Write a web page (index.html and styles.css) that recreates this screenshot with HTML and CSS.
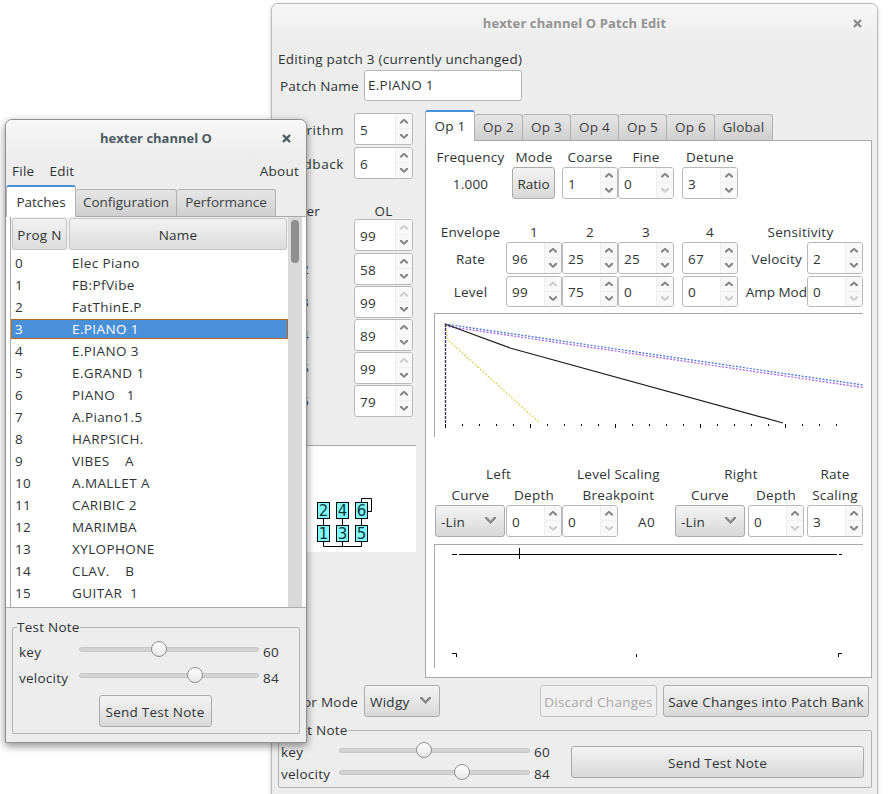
FILE: index.html
```html
<!DOCTYPE html>
<html lang="en">
<head>
<meta charset="utf-8">
<title>hexter channel O</title>
<link rel="stylesheet" href="styles.css">
</head>
<body>
<section class="win back">
  <header class="titlebar">
    <span></span><h1 class="wintitle">hexter channel O Patch Edit</h1>
    <svg class="closex" width="9" height="9" viewBox="0 0 9 9"><path d="M1 1L8 8M8 1L1 8"/></svg>
  </header>
  <p class="editing">Editing patch 3 (currently unchanged)</p>
  <div class="namerow"><label>Patch Name</label><div class="entry">E.PIANO 1</div></div>
  <div class="mainrow">
    <aside class="leftcol">
      <div class="lrow"><label>Algorithm</label><div class="spin wide"><span>5</span><i class="up"></i><i class="dn"></i></div></div>
      <div class="lrow"><label>Feedback</label><div class="spin wide"><span>6</span><i class="up"></i><i class="dn"></i></div></div>
      <div class="olhead"><span class="carrier">Carrier</span><span class="ol">OL</span></div>
      <div class="orow"><label>Op 1</label><div class="spin wide"><span>99</span><i class="up off"></i><i class="dn"></i></div></div>
      <div class="orow"><label>Op 2</label><div class="spin wide"><span>58</span><i class="up"></i><i class="dn"></i></div></div>
      <div class="orow"><label>Op 3</label><div class="spin wide"><span>99</span><i class="up off"></i><i class="dn"></i></div></div>
      <div class="orow"><label>Op 4</label><div class="spin wide"><span>89</span><i class="up"></i><i class="dn"></i></div></div>
      <div class="orow"><label>Op 5</label><div class="spin wide"><span>99</span><i class="up off"></i><i class="dn"></i></div></div>
      <div class="orow"><label>Op 6</label><div class="spin wide"><span>79</span><i class="up"></i><i class="dn"></i></div></div>
      <div class="algo">
        <svg width="138" height="106" viewBox="0 0 138 106">
          <path class="wire" d="M45.5 73V79M64.5 73V79M83.5 73V79M45.5 96V100.5H83.5V96M64.5 96V100.5M83.5 56V52.5H93.5V65.5H89"/>
          <g class="opbox">
            <rect x="39.5" y="56.5" width="12" height="16"/><rect x="58.5" y="56.5" width="12" height="16"/><rect x="77.5" y="56.5" width="12" height="16"/>
            <rect x="39.5" y="79.5" width="12" height="16"/><rect x="58.5" y="79.5" width="12" height="16"/><rect x="77.5" y="79.5" width="12" height="16"/>
          </g>
          <g class="opnum">
            <text x="45.5" y="70">2</text><text x="64.5" y="70">4</text><text x="83.5" y="70">6</text>
            <text x="45.5" y="93">1</text><text x="64.5" y="93">3</text><text x="83.5" y="93">5</text>
          </g>
        </svg>
      </div>
    </aside>
    <div class="notebook">
      <nav class="tabs">
        <span class="tab active t50">Op 1</span><span class="tab t48">Op 2</span><span class="tab t48">Op 3</span><span class="tab t48">Op 4</span><span class="tab t48">Op 5</span><span class="tab t48">Op 6</span><span class="tab t58">Global</span>
      </nav>
      <div class="panel">
        <div class="optrack top">
          <div class="c">Frequency</div><div class="c">Mode</div><div class="c">Coarse</div><div class="c">Fine</div><div class="c det">Detune</div>
          <div class="c mid rowstart">1.000</div>
          <div class="btn ratio">Ratio</div>
          <div class="spin"><span>1</span><i class="up"></i><i class="dn"></i></div>
          <div class="spin"><span>0</span><i class="up"></i><i class="dn off"></i></div>
          <div class="spin pushr"><span>3</span><i class="up"></i><i class="dn"></i></div>
        </div>
        <div class="optrack env">
          <div class="c">Envelope</div><div class="c">1</div><div class="c">2</div><div class="c">3</div><div class="c det">4</div><div class="c two">Sensitivity</div>
          <div class="c mid">Rate</div>
          <div class="spin"><span>96</span><i class="up"></i><i class="dn"></i></div>
          <div class="spin"><span>25</span><i class="up"></i><i class="dn"></i></div>
          <div class="spin"><span>25</span><i class="up"></i><i class="dn"></i></div>
          <div class="spin pushr"><span>67</span><i class="up"></i><i class="dn"></i></div>
          <div class="r mid">Velocity</div>
          <div class="spin"><span>2</span><i class="up"></i><i class="dn"></i></div>
          <div class="c midlo">Level</div>
          <div class="spin lo"><span>99</span><i class="up off"></i><i class="dn"></i></div>
          <div class="spin lo"><span>75</span><i class="up"></i><i class="dn"></i></div>
          <div class="spin lo"><span>0</span><i class="up"></i><i class="dn off"></i></div>
          <div class="spin pushr lo"><span>0</span><i class="up"></i><i class="dn off"></i></div>
          <div class="r midlo amp">Amp Mod</div>
          <div class="spin lo"><span>0</span><i class="up"></i><i class="dn off"></i></div>
        </div>
        <div class="graph g1">
          <svg width="428" height="123" viewBox="0 0 428 123">
            <path class="dot blue" d="M10 10L428 71"/>
            <path class="dot purple" d="M10 12L428 73.5"/>
            <path class="dot yellow" d="M10 10L13 26L105 109"/>
            <path class="solid" d="M10 10L75 34L348 109"/>
            <path class="vert" d="M10.5 10V109"/>
            <path class="tick" d="M10.5 110V114M27.5 110V112M44.5 110V112M61.5 110V112M78.5 110V112M95.5 110V114M112.5 110V112M129.5 110V112M146.5 110V112M163.5 110V112M180.5 110V114M197.5 110V112M214.5 110V112M231.5 110V112M248.5 110V112M265.5 110V114M282.5 110V112M299.5 110V112M316.5 110V112M333.5 110V112M350.5 110V114M367.5 110V112M384.5 110V112M401.5 110V112"/>
          </svg>
        </div>
        <div class="lstrack">
          <div class="c s2">Left</div><div class="c s2">Level Scaling</div><div class="c s2">Right</div><div class="c">Rate</div>
          <div class="c">Curve</div><div class="c">Depth</div><div class="c s2">Breakpoint</div><div class="c trim">Curve</div><div class="c trim">Depth</div><div class="c">Scaling</div>
          <div class="btn combo"><span>-Lin</span><i class="chev"></i></div>
          <div class="spin"><span>0</span><i class="up"></i><i class="dn off"></i></div>
          <div class="spin"><span>0</span><i class="up"></i><i class="dn off"></i></div>
          <div class="c mid">A0</div>
          <div class="btn combo"><span>-Lin</span><i class="chev"></i></div>
          <div class="spin"><span>0</span><i class="up"></i><i class="dn off"></i></div>
          <div class="spin"><span>3</span><i class="up"></i><i class="dn"></i></div>
        </div>
        <div class="graph g2">
          <svg width="428" height="123" viewBox="0 0 428 123">
            <path class="tick" d="M17 9.5H22M24 9.5H402M404 9.5H407M84.5 3V14M17 108.5H21.5V112M201.5 109V112M403.5 112V108.5H407"/>
          </svg>
        </div>
      </div>
    </div>
  </div>
  <div class="actions">
    <label class="modelabel">Editor Mode</label>
    <div class="btn combo widgy"><span>Widgy</span><i class="chev"></i></div>
    <div class="btn discard">Discard Changes</div>
    <div class="btn save">Save Changes into Patch Bank</div>
  </div>
  <fieldset class="note backnote">
    <legend>Test Note</legend>
    <div class="notecols">
      <div class="sliders">
        <div class="srow"><label>key</label><div class="slider"><b style="left:44.5%"></b></div><span>60</span></div>
        <div class="srow"><label>velocity</label><div class="slider"><b style="left:64.4%"></b></div><span>84</span></div>
      </div>
      <div class="btn sendwide">Send Test Note</div>
    </div>
  </fieldset>
</section>

<section class="win front">
  <header class="titlebar">
    <span></span><h1 class="wintitle">hexter channel O</h1>
    <svg class="closex" width="9" height="9" viewBox="0 0 9 9"><path d="M1 1L8 8M8 1L1 8"/></svg>
  </header>
  <nav class="menubar"><span>File</span><span>Edit</span><span class="about">About</span></nav>
  <nav class="tabs ftabs">
    <span class="tab active t70">Patches</span><span class="tab t101">Configuration</span><span class="tab t99">Performance</span>
  </nav>
  <div class="fpanel">
    <div class="tree">
      <div class="treemain">
        <div class="thead"><div class="th prog">Prog N</div><div class="th namecol">Name</div></div>
        <ul class="rows">
          <li><span>0</span><span>Elec Piano</span></li>
          <li><span>1</span><span>FB:PfVibe</span></li>
          <li><span>2</span><span>FatThinE.P</span></li>
          <li class="sel"><span>3</span><span>E.PIANO 1</span></li>
          <li><span>4</span><span>E.PIANO 3</span></li>
          <li><span>5</span><span>E.GRAND 1</span></li>
          <li><span>6</span><span>PIANO&nbsp;&nbsp; 1</span></li>
          <li><span>7</span><span>A.Piano1.5</span></li>
          <li><span>8</span><span>HARPSICH.</span></li>
          <li><span>9</span><span>VIBES&nbsp;&nbsp;&nbsp; A</span></li>
          <li><span>10</span><span>A.MALLET A</span></li>
          <li><span>11</span><span>CARIBIC 2</span></li>
          <li><span>12</span><span>MARIMBA</span></li>
          <li><span>13</span><span>XYLOPHONE</span></li>
          <li><span>14</span><span>CLAV.&nbsp;&nbsp;&nbsp; B</span></li>
          <li><span>15</span><span>GUITAR&nbsp; 1</span></li>
        </ul>
      </div>
      <div class="scroll"><div class="thumb"></div></div>
    </div>
  </div>
  <fieldset class="note frontnote">
    <legend>Test Note</legend>
    <div class="srow"><label>key</label><div class="slider"><b style="left:44.4%"></b></div><span>60</span></div>
    <div class="srow"><label>velocity</label><div class="slider"><b style="left:64.4%"></b></div><span>84</span></div>
    <div class="btn sendsmall">Send Test Note</div>
  </fieldset>
</section>
</body>
</html>
```
FILE: styles.css
```css
* { box-sizing: border-box; }
html, body { margin: 0; height: 100%; }
body {
  background: #fff;
  overflow: hidden;
  font-family: "Open Sans", "Noto Sans", sans-serif;
  font-size: 13.5px;
  letter-spacing: .25px;
  color: #2e3436;
  line-height: 20px;
}
label { display: block; white-space: nowrap; }
p, h1, ul { margin: 0; padding: 0; }

/* windows on the desktop */
.win {
  position: absolute;
  background: #ededed;
  border-radius: 7px 7px 0 0;
}
.back {
  left: 271px; top: 3px; width: 607px; height: 810px;
  border: 1px solid #bdbdbd;
  box-shadow: 0 1px 4px rgba(0,0,0,.18);
}
.front {
  left: 5px; top: 119px; width: 302px; height: 624px;
  border: 1px solid #8f8f8f;
  border-radius: 7px 7px 1px 1px;
  box-shadow: 0 3px 8px rgba(0,0,0,.45);
  z-index: 2;
}

/* title bars */
.titlebar {
  display: grid;
  grid-template-columns: 1fr auto 1fr;
  align-items: center;
  height: 36px;
  padding-top: 2px;
  border-radius: 6px 6px 0 0;
  background: linear-gradient(#f7f7f7, #ededed);
}
.front .titlebar { padding-top: 0; }
.wintitle { font-size: 13px; font-weight: 700; line-height: 20px; color: #939393; letter-spacing: .1px; }
.front .wintitle { letter-spacing: 0; }
.closex { justify-self: end; margin-right: 15px; }
.closex path { stroke: #8c8c8c; stroke-width: 2.4; fill: none; }
.front .wintitle { color: #4c5b63; }
.front .closex path { stroke: #4c5b63; }

/* back window content */
.editing { padding: 9px 0 0 6px; height: 30px; white-space: nowrap; }
.namerow { display: flex; align-items: center; height: 31px; padding-left: 8px; gap: 6px; }
.namerow label { width: 78px; }
.entry {
  width: 158px; height: 31px; padding: 0 3px; line-height: 29px;
  background: #fff; border: 1px solid #b6b6b6; border-radius: 3px;
}
.mainrow { display: flex; margin-top: 8px; padding-left: 6px; }
.leftcol { width: 147px; padding-top: 4px; flex: none; }
.lrow { display: flex; justify-content: flex-end; align-items: center; gap: 10px; padding-right: 12px; margin-bottom: 2px; }
.lrow label { width: 70px; flex: none; text-align: right; padding-top: 2px; letter-spacing: .6px; }
.olhead { display: flex; height: 19px; margin-top: 21px; padding-top: 3px; align-items: center; white-space: nowrap; }
.carrier { width: 60px; margin-left: -18px; flex: none; text-align: right; }
.ol { margin-left: 44px; width: 39px; text-align: center; }
.orow { display: flex; justify-content: flex-end; align-items: center; padding-right: 12px; margin-bottom: 1px; }
.olhead + .orow { margin-bottom: 2px; }
.orow label { margin-right: 45px; flex: none; }
.algo {
  width: 138px; height: 107px; margin-top: 28px;
  background: #fff; border-top: 1px solid #a9a9a9;
}
.algo svg { display: block; }
.wire { fill: none; stroke: #000; stroke-width: 1; }
.opbox rect { fill: #7ffcff; stroke: #000; stroke-width: 1; }
.opnum text { font-family: "DejaVu Sans", sans-serif; font-size: 15px; letter-spacing: 0; fill: #163636; text-anchor: middle; }

/* spin buttons */
.spin {
  display: grid;
  grid-template-columns: 1fr 17px;
  grid-template-rows: 1fr 1fr;
  flex: none;
  width: 56px; height: 32px;
  background: #fff;
  border: 1px solid #b9b9b9;
  border-radius: 3px;
  overflow: hidden;
}
.spin.wide { width: 59px; }
.spin span { grid-row: 1 / 3; padding-left: 5px; line-height: 32px; }
.spin.lo { height: 31px; margin-top: 2px; }
.spin.lo span { line-height: 30px; }
.spin i {
  display: flex; align-items: center; justify-content: center;
  grid-column: 2; background: #f8f8f8; border-left: 1px solid #eee;
}
.spin i.up { border-bottom: 1px solid #f0f0f0; }
.spin i::after { content: ""; width: 8px; height: 5px; background: #858585; }
.spin i.up::after { clip-path: polygon(50% 0, 100% 72%, 100% 100%, 78% 100%, 50% 52%, 22% 100%, 0 100%, 0 72%); }
.spin i.dn::after { clip-path: polygon(0 0, 22% 0, 50% 48%, 78% 0, 100% 0, 100% 28%, 50% 100%, 0 28%); }
.spin i.off::after { background: #cdcdcd; }

/* notebooks */
.tabs { display: flex; align-items: flex-end; height: 31px; }
.tab {
  height: 26px; line-height: 24px; text-align: center; white-space: nowrap;
  background: linear-gradient(#e6e6e6, #cfcfcf);
  border: 1px solid #b1b1b1; border-bottom: none; border-left-width: 0;
  border-radius: 3px 3px 0 0; color: #3a4144;
}
.tab.active {
  height: 31px; line-height: 29px; background: #fff; color: #2e3436;
  border: 1px solid #b1b1b1; border-top: 2px solid #4a90d9; border-bottom: none;
  position: relative; top: 1px; z-index: 1;
}
.t50 { width: 50px; } .t48 { width: 48px; } .t58 { width: 58px; }
.notebook { width: 447px; flex: none; }
.panel {
  height: 538px; background: #fff;
  border: 1px solid #a9a9a9; padding: 6px 0 0 9px;
}
.c { text-align: center; white-space: nowrap; }
.r { text-align: right; white-space: nowrap; padding-right: 5px; }
.mid { align-self: center; padding-top: 2px; }
.midlo { align-self: center; padding-top: 2px; }
.rowstart { grid-column: 1; }
.optrack {
  display: grid;
  grid-template-columns: 71px 56px 56px 56px 64px 69px 56px;
}
.top { grid-template-rows: 20px 32px; }
.env { grid-template-rows: 20px 32px 34px; margin-top: 23px; }
.det { padding-left: 8px; }
.two { grid-column: span 2; }
.pushr { justify-self: end; }
.amp { padding-right: 0; letter-spacing: 0; }
.ratio { width: 43px; margin-left: 6px; letter-spacing: 0; }
.graph { margin-left: -1px; width: 429px; height: 124px; background: #fff; border-top: 1px solid #a9a9a9; border-left: 1px solid #a9a9a9; }
.graph svg { display: block; }
.g1 { margin-top: 5px; }
.dot { fill: none; stroke-width: 1.2; stroke-dasharray: 2 1.5; }
.blue { stroke: #3d73d4; }
.purple { stroke: #a65cf0; }
.yellow { stroke: #e6c53c; stroke-width: 1.4; stroke-dasharray: 1.5 2; }
.solid { fill: none; stroke: #1a1a1a; stroke-width: 1.2; }
.vert { stroke: #3a3a6a; stroke-width: 1.4; stroke-dasharray: 3 1; }
.tick { fill: none; stroke: #000; stroke-width: 1; }
.lstrack {
  display: grid;
  grid-template-columns: 71px 56px 56px 57px 73px 59px 56px;
  grid-template-rows: 21px 20px 32px;
  margin-top: 27px;
}
.s2 { grid-column: span 2; }
.trim { padding-right: 3px; }
.g2 { margin-top: 7px; }

/* buttons and combos */
.btn {
  height: 32px; line-height: 32px; text-align: center; white-space: nowrap;
  background: linear-gradient(#f4f4f4, #d8d8d8);
  border: 1px solid #ababab; border-radius: 3px;
}
.combo {
  display: flex; justify-content: space-between; align-items: center;
  width: 70px; padding: 2px 8px 0 5px;
}
.chev {
  width: 11px; height: 7px; margin-top: -3px; background: #888;
  clip-path: polygon(0 0, 20% 0, 50% 55%, 80% 0, 100% 0, 100% 20%, 50% 100%, 0 20%);
}
.actions { display: flex; align-items: center; height: 32px; margin-top: 7px; padding-left: 6px; }
.modelabel { width: 80px; text-align: right; margin-right: 6px; padding-top: 2px; }
.widgy { width: 76px; }
.discard { width: 117px; margin-left: auto; color: #a8a8a8; background: #efefef; border-color: #c4c4c4; }
.save { width: 206px; margin-left: 6px; margin-right: 8px; }

/* test note groups */
.note { border: 1px solid #b4b4b4; border-radius: 2px; margin: 0; padding: 0; min-width: 0; }
.note legend { padding: 0; margin-left: 4px; height: 20px; line-height: 20px; }
.backnote { width: 594px; margin: 3px 0 0 6px; padding: 1px 7px 2px 2px; }
.notecols { display: flex; align-items: flex-start; justify-content: space-between; }
.srow { display: flex; align-items: center; height: 22px; }
.srow > span { margin-left: 4px; }
.backnote .srow label { width: 58px; }
.backnote .slider { width: 191px; }
.sendwide { width: 293px; margin-top: 5px; }
.slider {
  position: relative; height: 5px; margin-bottom: 4px; border-radius: 3px;
  background: #d3d3d3; border: 1px solid #c6c6c6;
}
.slider b {
  position: absolute; top: -7px; width: 16px; height: 16px; margin-left: -8px;
  border-radius: 50%; background: linear-gradient(#fff, #e8e8e8); border: 1px solid #8f8f8f;
}

/* front window content */
.menubar { display: flex; height: 28px; align-items: center; padding: 2px 7px 0 6px; gap: 15px; }
.about { margin-left: auto; }
.ftabs { height: 32px; letter-spacing: 0; }
.t70 { width: 70px; } .t101 { width: 101px; } .t99 { width: 99px; }
.ftabs .tab { height: 27px; line-height: 25px; }
.ftabs .tab.active { height: 32px; line-height: 30px; }
.fpanel {
  height: 392px; padding: 0 4px 0 4px; background: #fff;
  border-top: 1px solid #a9a9a9; border-bottom: 1px solid #a9a9a9;
}
.tree { display: flex; height: 100%; border-left: 1px solid #a9a9a9; }
.treemain { width: 278px; overflow: hidden; }
.thead { display: flex; gap: 2px; height: 33px; padding: 1px 0 0 1px; background: #f0f0f0; }
.th {
  height: 32px; line-height: 33px; text-align: center;
  background: linear-gradient(#f2f2f2, #dcdcdc); border: 1px solid #c6c6c6; border-radius: 3px;
}
.prog { width: 55px; }
.namecol { width: 218px; }
.rows { list-style: none; padding-top: 2px; letter-spacing: .4px; }
.rows li { display: flex; height: 22px; line-height: 22px; padding-left: 4px; white-space: nowrap; }
.rows li span:first-child { width: 57px; }
.rows li.sel {
  background: #4a90d9; color: #fff; height: 20px; line-height: 18px; margin: 1px 0;
  border: 1px solid #b9691f; padding-left: 3px;
}
.scroll { width: 14px; background: #d9d9d9; padding: 3px 3px; }
.thumb { height: 43px; width: 8px; border-radius: 4px; background: #8f8f8f; }
.frontnote { width: 288px; height: 117px; margin: 9px 0 0 6px; padding: 2px 6px 0 6px; }
.frontnote legend { margin-left: -2px; }
.frontnote .srow { height: 26px; }
.frontnote .srow label { width: 60px; }
.frontnote .slider { width: 180px; margin-bottom: 6px; }
.sendsmall { width: 113px; margin: 4px auto 0; position: relative; left: -1px; }
```
